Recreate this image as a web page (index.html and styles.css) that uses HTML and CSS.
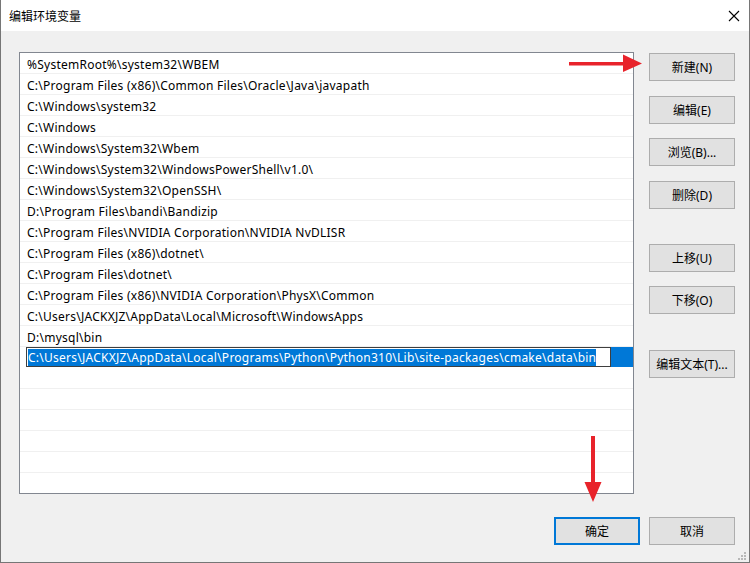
FILE: index.html
```html
<!DOCTYPE html>
<html lang="zh-CN">
<head>
    <meta charset="UTF-8">
    <title>编辑环境变量</title>
    <link rel="stylesheet" href="styles.css">
</head>
<body>
    <div class="window">
        <div class="titlebar">
            <span class="title">编辑环境变量</span>
            <svg class="close" width="12" height="12" viewBox="0 0 12 12"><path d="M1 1 L11 11 M11 1 L1 11" stroke="#000" stroke-width="1.1" fill="none"/></svg>
        </div>
        <div class="content">
            <div class="main">
                <div class="pathlist">
                    <div class="row">%SystemRoot%\system32\WBEM</div>
                    <div class="row">C:\Program Files (x86)\Common Files\Oracle\Java\javapath</div>
                    <div class="row">C:\Windows\system32</div>
                    <div class="row">C:\Windows</div>
                    <div class="row">C:\Windows\System32\Wbem</div>
                    <div class="row">C:\Windows\System32\WindowsPowerShell\v1.0\</div>
                    <div class="row">C:\Windows\System32\OpenSSH\</div>
                    <div class="row">D:\Program Files\bandi\Bandizip</div>
                    <div class="row">C:\Program Files\NVIDIA Corporation\NVIDIA NvDLISR</div>
                    <div class="row">C:\Program Files (x86)\dotnet\</div>
                    <div class="row">C:\Program Files\dotnet\</div>
                    <div class="row">C:\Program Files (x86)\NVIDIA Corporation\PhysX\Common</div>
                    <div class="row">C:\Users\JACKXJZ\AppData\Local\Microsoft\WindowsApps</div>
                    <div class="row">D:\mysql\bin</div>
                    <div class="row row-edit">
                        <div class="edit"><span class="sel">C:\Users\JACKXJZ\AppData\Local\Programs\Python\Python310\Lib\site-packages\cmake\data\bin</span></div>
                        <div class="fill"></div>
                    </div>
                    <div class="row"></div>
                    <div class="row"></div>
                    <div class="row"></div>
                    <div class="row"></div>
                    <div class="row"></div>
                    <div class="row"></div>
                </div>
                <div class="side">
                    <button class="btn b-new">新建(N)</button>
                    <button class="btn b-edit">编辑(E)</button>
                    <button class="btn b-browse">浏览(B)...</button>
                    <button class="btn b-del">删除(D)</button>
                    <button class="btn b-up">上移(U)</button>
                    <button class="btn b-down">下移(O)</button>
                    <button class="btn b-text">编辑文本(T)...</button>
                </div>
            </div>
            <div class="footer">
                <button class="btn btn-default">确定</button>
                <button class="btn b-cancel">取消</button>
            </div>
        </div>
        <svg class="grip" width="10" height="10" viewBox="0 0 10 10">
            <rect x="7" y="1" width="2" height="2" fill="#b8b8b8"/>
            <rect x="4" y="4" width="2" height="2" fill="#b8b8b8"/>
            <rect x="7" y="4" width="2" height="2" fill="#b8b8b8"/>
            <rect x="1" y="7" width="2" height="2" fill="#b8b8b8"/>
            <rect x="4" y="7" width="2" height="2" fill="#b8b8b8"/>
            <rect x="7" y="7" width="2" height="2" fill="#b8b8b8"/>
        </svg>
        <!-- red annotation arrows -->
        <svg class="arrow arrow-right" width="80" height="20" viewBox="0 0 80 20">
            <path d="M0 8 L54 8 L54 0.5 L73 9.5 L54 18 L54 11.5 L0 11.5 Z" fill="#e8232b"/>
        </svg>
        <svg class="arrow arrow-down" width="20" height="70" viewBox="0 0 20 70">
            <path d="M8 0 L12 0 L12 46 L18.5 46 L10 66 L1.5 46 L8 46 Z" fill="#e8232b"/>
        </svg>
    </div>
</body>
</html>
```

FILE: styles.css
```css
body
{
    margin: 0;
    font-family: "Noto Sans", "Noto Sans CJK SC", sans-serif;
    font-size: 12px;
    color: #000;
}

.window
{
    position: relative;
    width: 750px;
    height: 563px;
    box-sizing: border-box;
    background: #f0f0f0;
    border: 1px solid #767676;
    border-top: none;
    overflow: hidden;
}

.titlebar
{
    height: 31px;
    background: #fff;
    display: flex;
    align-items: center;
    justify-content: space-between;
    padding: 0 9px 0 8px;
}

.title
{
    font-family: "Noto Sans CJK SC", sans-serif;
    font-size: 12px;
}

.close
{
    display: block;
}

.content
{
    padding: 21px 0 0 18px;
}

.main
{
    display: flex;
}

.pathlist
{
    width: 615px;
    height: 442px;
    box-sizing: border-box;
    border: 1px solid #828790;
    background: #fff;
    overflow: hidden;
}

.row
{
    height: 19px;
    padding-top: 1px;
    line-height: 21px;
    border-bottom: 1px solid #f0f0f0;
    padding-left: 7px;
    white-space: nowrap;
    letter-spacing: 0.25px;
}

.row-edit
{
    display: flex;
    height: 20px;
    padding-top: 0;
    padding-left: 6px;
    border-bottom-color: #fff;
}

.edit
{
    width: 585px;
    height: 20px;
    box-sizing: border-box;
    border: 1px solid #3f3f3f;
    background: #fff;
    padding-left: 1px;
    line-height: 20px;
}

.sel
{
    background: #0078d7;
    color: #fff;
}

.fill
{
    flex: 1;
    background: #0078d7;
}

.side
{
    display: flex;
    flex-direction: column;
    margin-left: 15px;
}

.btn
{
    width: 86px;
    height: 28px;
    box-sizing: border-box;
    border: 1px solid #adadad;
    background: #e1e1e1;
    font-family: "Noto Sans", "Noto Sans CJK SC", sans-serif;
    font-size: 12px;
    color: #000;
    padding: 0;
}

.b-new { margin-top: 1px; }
.b-edit { margin-top: 15px; }
.b-browse { margin-top: 14px; }
.b-del { margin-top: 15px; }
.b-up { margin-top: 35px; }
.b-down { margin-top: 14px; }
.b-text { margin-top: 36px; }

.footer
{
    display: flex;
    justify-content: flex-end;
    margin-top: 23px;
    padding-right: 14px;
}

.btn-default
{
    border: 2px solid #0078d7;
}

.b-cancel
{
    margin-left: 9px;
}

.grip
{
    position: absolute;
    right: 2px;
    bottom: 1px;
}

.arrow
{
    position: absolute;
}

.arrow-right
{
    left: 568px;
    top: 54px;
}

.arrow-down
{
    left: 582px;
    top: 436px;
}
```
